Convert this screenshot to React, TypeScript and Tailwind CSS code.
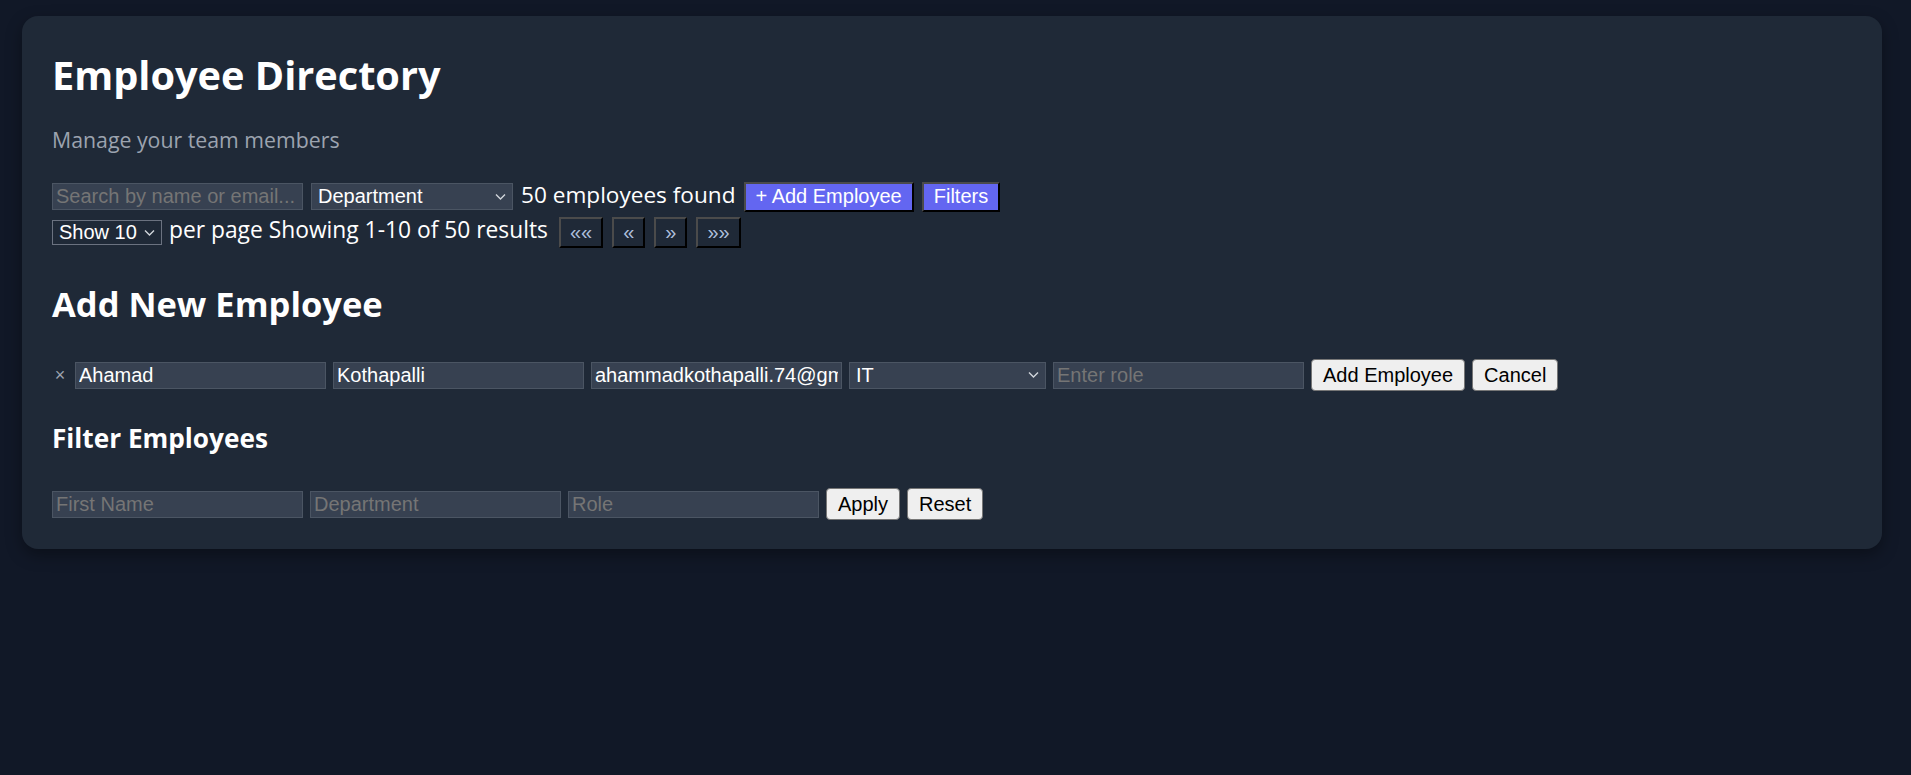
const Chevron = () => (
  <svg width="11" height="7" viewBox="0 0 11 7" fill="none" stroke="currentColor" strokeWidth="1.4">
    <path d="M1 1l4.5 4.5L10 1" />
  </svg>
);

const inputCls =
  "h-[27px] w-[251px] bg-[#374151] border border-[#4b5563] px-[3px] text-[20px] leading-[23px] font-['Liberation_Sans',Arial,sans-serif] text-white placeholder:text-[#757575] outline-none";
const purpleBtn =
  "h-[30px] px-[10px] bg-[#6366f1] text-white text-[20px] font-['Liberation_Sans',Arial,sans-serif] border-2 border-t-[#4b4b4b] border-l-[#4b4b4b] border-r-black border-b-black leading-[23px]";
const darkBtn =
  "h-[31px] px-[9px] bg-[#1f2937] text-[#aebfdc] text-[20px] font-['Liberation_Sans',Arial,sans-serif] border-2 border-t-[#4b4b4b] border-l-[#4b4b4b] border-r-black border-b-black leading-[23px]";
const lightBtn =
  "h-[32px] px-[11px] bg-[#efefef] text-black text-[20px] font-['Liberation_Sans',Arial,sans-serif] border border-[#767676] rounded-[4px] leading-[23px]";

function SelectBox({
  w,
  h,
  value,
  options,
  dark,
}: {
  w: string;
  h: string;
  value: string;
  options: string[];
  dark?: boolean;
}) {
  return (
    <div className={`relative ${w} ${h}`}>
      <select
        defaultValue={value}
        className={`appearance-none w-full h-full py-0 pl-[6px] pr-[20px] text-[20px] leading-[23px] font-['Liberation_Sans',Arial,sans-serif] text-white outline-none ${
          dark ? "bg-[#1f2937] border border-[#6b7280]" : "bg-[#374151] border border-[#4b5563]"
        }`}
      >
        {options.map((o) => (
          <option key={o} value={o} className="bg-[#374151]">
            {o}
          </option>
        ))}
      </select>
      <span className="pointer-events-none absolute right-[7px] top-1/2 -translate-y-1/2 text-[#d1d5db] flex">
        <Chevron />
      </span>
    </div>
  );
}

export default function App() {
  return (
    <div className="min-h-screen bg-[#111827] pt-[16px] font-['Open_Sans',sans-serif] text-[#f9fafb]">
      <div className="ml-[22px] w-[1860px] rounded-[16px] bg-[#1f2937] px-[30px] pt-[30px] pb-[29px] shadow-[0_6px_16px_rgba(0,0,0,0.35)]">
        <h1 className="mt-[5px] text-[39.7px] leading-[48px] font-bold text-white">Employee Directory</h1>
        <p className="mt-[27px] text-[21.3px] leading-[28px] text-[#9ca3af]">Manage your team members</p>

        <div className="mt-[26px] flex h-[33px] items-center gap-[8px]">
          <input className={inputCls} placeholder="Search by name or email..." />
          <SelectBox
            w="w-[202px]"
            h="h-[27px]"
            value="Department"
            options={["Department", "IT", "HR", "Finance", "Marketing"]}
          />
          <span className="mb-[3px] text-[22.6px] leading-[28px] text-white">50 employees found</span>
          <button className={purpleBtn}>+ Add Employee</button>
          <button className={purpleBtn}>Filters</button>
        </div>

        <div className="mt-[3px] flex h-[33px] items-center gap-[7px]">
          <SelectBox w="w-[110px]" h="h-[25px]" value="Show 10" options={["Show 10", "Show 20", "Show 50"]} dark />
          <span className="mb-[5px] text-[22.8px] leading-[28px] text-white">per page Showing 1-10 of 50 results</span>
          <div className="ml-[4px] flex items-center gap-[9px]">
            <button className={darkBtn}>««</button>
            <button className={darkBtn}>«</button>
            <button className={darkBtn}>»</button>
            <button className={darkBtn}>»»</button>
          </div>
        </div>

        <h2 className="mt-[35px] text-[34.5px] leading-[40px] font-bold text-white">Add New Employee</h2>

        <div className="mt-[35px] flex h-[32px] items-center gap-[7px]">
          <span className="w-[16px] text-center text-[18px] leading-[20px] text-[#9ca3af] font-['Liberation_Sans',Arial,sans-serif]">
            ×
          </span>
          <input className={inputCls} defaultValue="Ahamad" />
          <input className={inputCls} defaultValue="Kothapalli" />
          <input className={inputCls} defaultValue="ahammadkothapalli.74@gmail.com" />
          <SelectBox w="w-[197px]" h="h-[27px]" value="IT" options={["IT", "HR", "Finance", "Marketing"]} />
          <input className={inputCls} placeholder="Enter role" />
          <button className={lightBtn}>Add Employee</button>
          <button className={lightBtn}>Cancel</button>
        </div>

        <h3 className="mt-[31px] text-[26.2px] leading-[32px] font-bold text-white">Filter Employees</h3>

        <div className="mt-[34px] flex h-[32px] items-center gap-[7px]">
          <input className={inputCls} placeholder="First Name" />
          <input className={inputCls} placeholder="Department" />
          <input className={inputCls} placeholder="Role" />
          <button className={lightBtn}>Apply</button>
          <button className={lightBtn}>Reset</button>
        </div>
      </div>
    </div>
  );
}
